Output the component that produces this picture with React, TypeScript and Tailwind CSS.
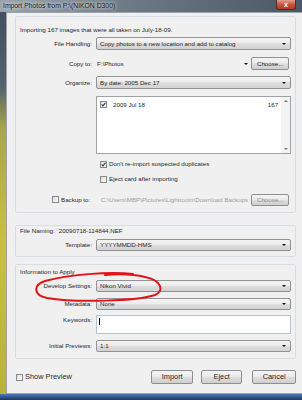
import React from "react";

const sel =
  "flex items-center rounded-[2px] border border-[#8f9396] bg-[linear-gradient(#f4f4f4,#ececec_45%,#dedede_52%,#d2d2d2)] pl-[3px] pr-[4px]";
const btn =
  "flex items-center justify-center rounded-[2px] border border-[#8c8f92] bg-[linear-gradient(#f4f4f4,#ebebeb_45%,#dddddd_52%,#cfcfcf)]";

function Arrow() {
  return (
    <span className="h-0 w-0 border-l-[2px] border-r-[2px] border-t-[2.5px] border-l-transparent border-r-transparent border-t-[#111]" />
  );
}

function Check({ on = false }: { on?: boolean }) {
  return (
    <span className="flex h-[7px] w-[7px] shrink-0 items-center justify-center border border-[#8a8a8a] bg-[linear-gradient(135deg,#dcdcdc,#ffffff)]">
      {on && (
        <svg viewBox="0 0 6 6" className="h-[5px] w-[5px]">
          <path d="M0.8 3 L2.4 4.6 L5.3 1" fill="none" stroke="#2a3a6a" strokeWidth="1.3" />
        </svg>
      )}
    </span>
  );
}

function Label({ children }: { children: React.ReactNode }) {
  return <span className="w-[76px] shrink-0 pr-[4px] text-right">{children}</span>;
}

export default function App() {
  return (
    <div className="relative flex h-[400px] w-[302px] flex-col overflow-hidden bg-[linear-gradient(#3f4c5a_0%,#56626d_22%,#a8a64a_32%,#c9c13e_60%,#b9b338_96%)] font-['Liberation_Sans',Arial,sans-serif] text-[6.2px] leading-[8px] text-[#262626]">
      {/* title bar */}
      <div className="flex h-[12px] shrink-0 items-center bg-[linear-gradient(90deg,#9aa3ab,#6f7b86_40%,#4b5865_100%)] pl-[3px]">
        <span className="flex-1 text-[6.8px] text-[#141414] [text-shadow:0_0_3px_#e8edf2,0_0_5px_#e8edf2]">
          Import Photos from P:\(NIKON D300)
        </span>
        <span className="mr-[6px] flex h-[10px] w-[20px] items-center justify-center self-start rounded-b-[3px] border border-t-0 border-[#5a2a22] bg-[linear-gradient(#e0a08e,#c8563e_50%,#b53a22)] text-[7px] font-bold leading-none text-white">
          x
        </span>
      </div>

      <div className="flex flex-1">
        <div className="w-[6px] shrink-0" />
        {/* client area */}
        <div className="flex flex-1 flex-col border border-[#9aa4ad] bg-[#f0f0f0] px-[8px] pt-[3px]">
          {/* group 1 */}
          <div className="flex h-[197px] flex-col rounded-[2px] border border-[#d6dde3] pl-[4px] pr-[4px]">
            <div className="mt-[9px] h-[8px]">Importing 167 images that were all taken on July-18-09.</div>
            <div className="mt-[3px] flex h-[13px] items-center">
              <Label>File Handling:</Label>
              <div className={sel + " h-[13px] flex-1"}>
                <span className="flex-1">Copy photos to a new location and add to catalog</span>
                <Arrow />
              </div>
            </div>
            <div className="mt-[7px] flex h-[13px] items-center">
              <Label>Copy to:</Label>
              <span className="flex-1 pl-[1px]">F:\Photos</span>
              <Arrow />
              <div className={btn + " ml-[3px] mr-[2px] h-[13px] w-[38px]"}>Choose...</div>
            </div>
            <div className="mt-[6px] flex h-[13px] items-center">
              <Label>Organize:</Label>
              <div className={sel + " h-[13px] flex-1"}>
                <span className="flex-1">By date: 2005 Dec 17</span>
                <Arrow />
              </div>
            </div>
            <div className="mt-[7px] flex h-[58px]">
              <span className="w-[76px] shrink-0" />
              <div className="flex flex-1 border border-[#9ea3a8] bg-white">
                <div className="flex flex-1 items-start pl-[3px] pr-[3px] pt-[4px]">
                  <Check on />
                  <span className="ml-[6px] flex-1">2009 Jul 18</span>
                  <span>167</span>
                </div>
                <div className="flex w-[9px] flex-col items-center justify-between bg-[#f3f3f3] py-[3px]">
                  <span className="h-0 w-0 border-b-[2px] border-l-[2px] border-r-[2px] border-b-[#777] border-l-transparent border-r-transparent" />
                  <span className="h-0 w-0 border-l-[2px] border-r-[2px] border-t-[2px] border-l-transparent border-r-transparent border-t-[#777]" />
                </div>
              </div>
            </div>
            <div className="mt-[6px] flex h-[8px] items-center pl-[80px]">
              <Check on />
              <span className="ml-[2px]">Don't re-import suspected duplicates</span>
            </div>
            <div className="mt-[7px] flex h-[8px] items-center pl-[80px]">
              <Check />
              <span className="ml-[2px]">Eject card after importing</span>
            </div>
            <div className="mt-[10px] flex h-[13px] items-center">
              <div className="flex w-[80px] shrink-0 items-center pl-[32px]">
                <Check />
                <span className="ml-[2px]">Backup to:</span>
              </div>
              <span className="flex-1 truncate pl-[1px] text-[#9d9d9d]">
                C:\Users\MBP\Pictures\Lightroom\Download Backups
              </span>
              <div className={btn + " ml-[3px] mr-[2px] h-[12px] w-[38px] text-[#8a8a8a]"}>Choose...</div>
            </div>
          </div>

          {/* group 2 */}
          <div className="mt-[12px] flex h-[32px] flex-col rounded-[2px] border border-[#d6dde3] pl-[4px] pr-[4px]">
            <div className="mt-[1px] h-[8px]">
              File Naming:<span className="ml-[4px]">20090718-114844.NEF</span>
            </div>
            <div className="mt-[4px] flex h-[12px] items-center">
              <Label>Template:</Label>
              <div className={sel + " h-[12px] flex-1"}>
                <span className="flex-1">YYYYMMDD-HMS</span>
                <Arrow />
              </div>
            </div>
          </div>

          {/* group 3 */}
          <div className="relative mt-[7px] flex h-[95px] flex-col rounded-[2px] border border-[#d6dde3] pl-[4px] pr-[4px]">
            <div className="mt-[3px] h-[8px]">Information to Apply</div>
            <div className="mt-[4px] flex h-[12px] items-center">
              <Label>Develop Settings:</Label>
              <div className={sel + " h-[12px] flex-1"}>
                <span className="flex-1">Nikon Vivid</span>
                <Arrow />
              </div>
            </div>
            <div className="mt-[6px] flex h-[12px] items-center">
              <Label>Metadata:</Label>
              <div className={sel + " h-[12px] flex-1"}>
                <span className="flex-1">None</span>
                <Arrow />
              </div>
            </div>
            <div className="mt-[5px] flex h-[19px]">
              <Label>
                <span className="leading-[10px]">Keywords:</span>
              </Label>
              <div className="flex flex-1 border border-[#b5c3d3] bg-white pl-[2px] pt-[2px]">
                <span className="h-[7px] w-px bg-black" />
              </div>
            </div>
            <div className="mt-[6px] flex h-[12px] items-center">
              <Label>Initial Previews:</Label>
              <div className={sel + " h-[12px] flex-1"}>
                <span className="flex-1">1:1</span>
                <Arrow />
              </div>
            </div>
            {/* red hand-drawn marker */}
            <svg
              viewBox="0 0 128 32"
              className="pointer-events-none absolute left-[19px] top-[6px] h-[32px] w-[128px]"
            >
              <path
                d="M98 3 C74 0 32 4 10 10 C-2 14 -2 24 12 27 C42 32 102 30 120 24 C130 20 126 9 110 6 C98 3 82 3 70 4"
                fill="none"
                stroke="#e3121a"
                strokeWidth="2"
                strokeLinecap="round"
              />
            </svg>
          </div>

          {/* footer */}
          <div className="mt-[11px] flex h-[14px] items-center text-[7.4px]">
            <span className="ml-[1px]">
              <Check />
            </span>
            <span className="ml-[2px] flex-1">Show Preview</span>
            <div className={btn + " h-[14px] w-[42px] border-[#3c7fb1] bg-[linear-gradient(#eaf6fd,#d9f0fc_45%,#bee6fd_52%,#a7d9f5)]"}>
              Import
            </div>
            <div className={btn + " ml-[8px] h-[14px] w-[41px]"}>Eject</div>
            <div className={btn + " ml-[10px] h-[14px] w-[44px]"}>Cancel</div>
          </div>
        </div>
        <div className="w-[6px] shrink-0" />
      </div>
      <div className="h-[6px] shrink-0 bg-[linear-gradient(#4a78b8,#1c3566)]" />
    </div>
  );
}
